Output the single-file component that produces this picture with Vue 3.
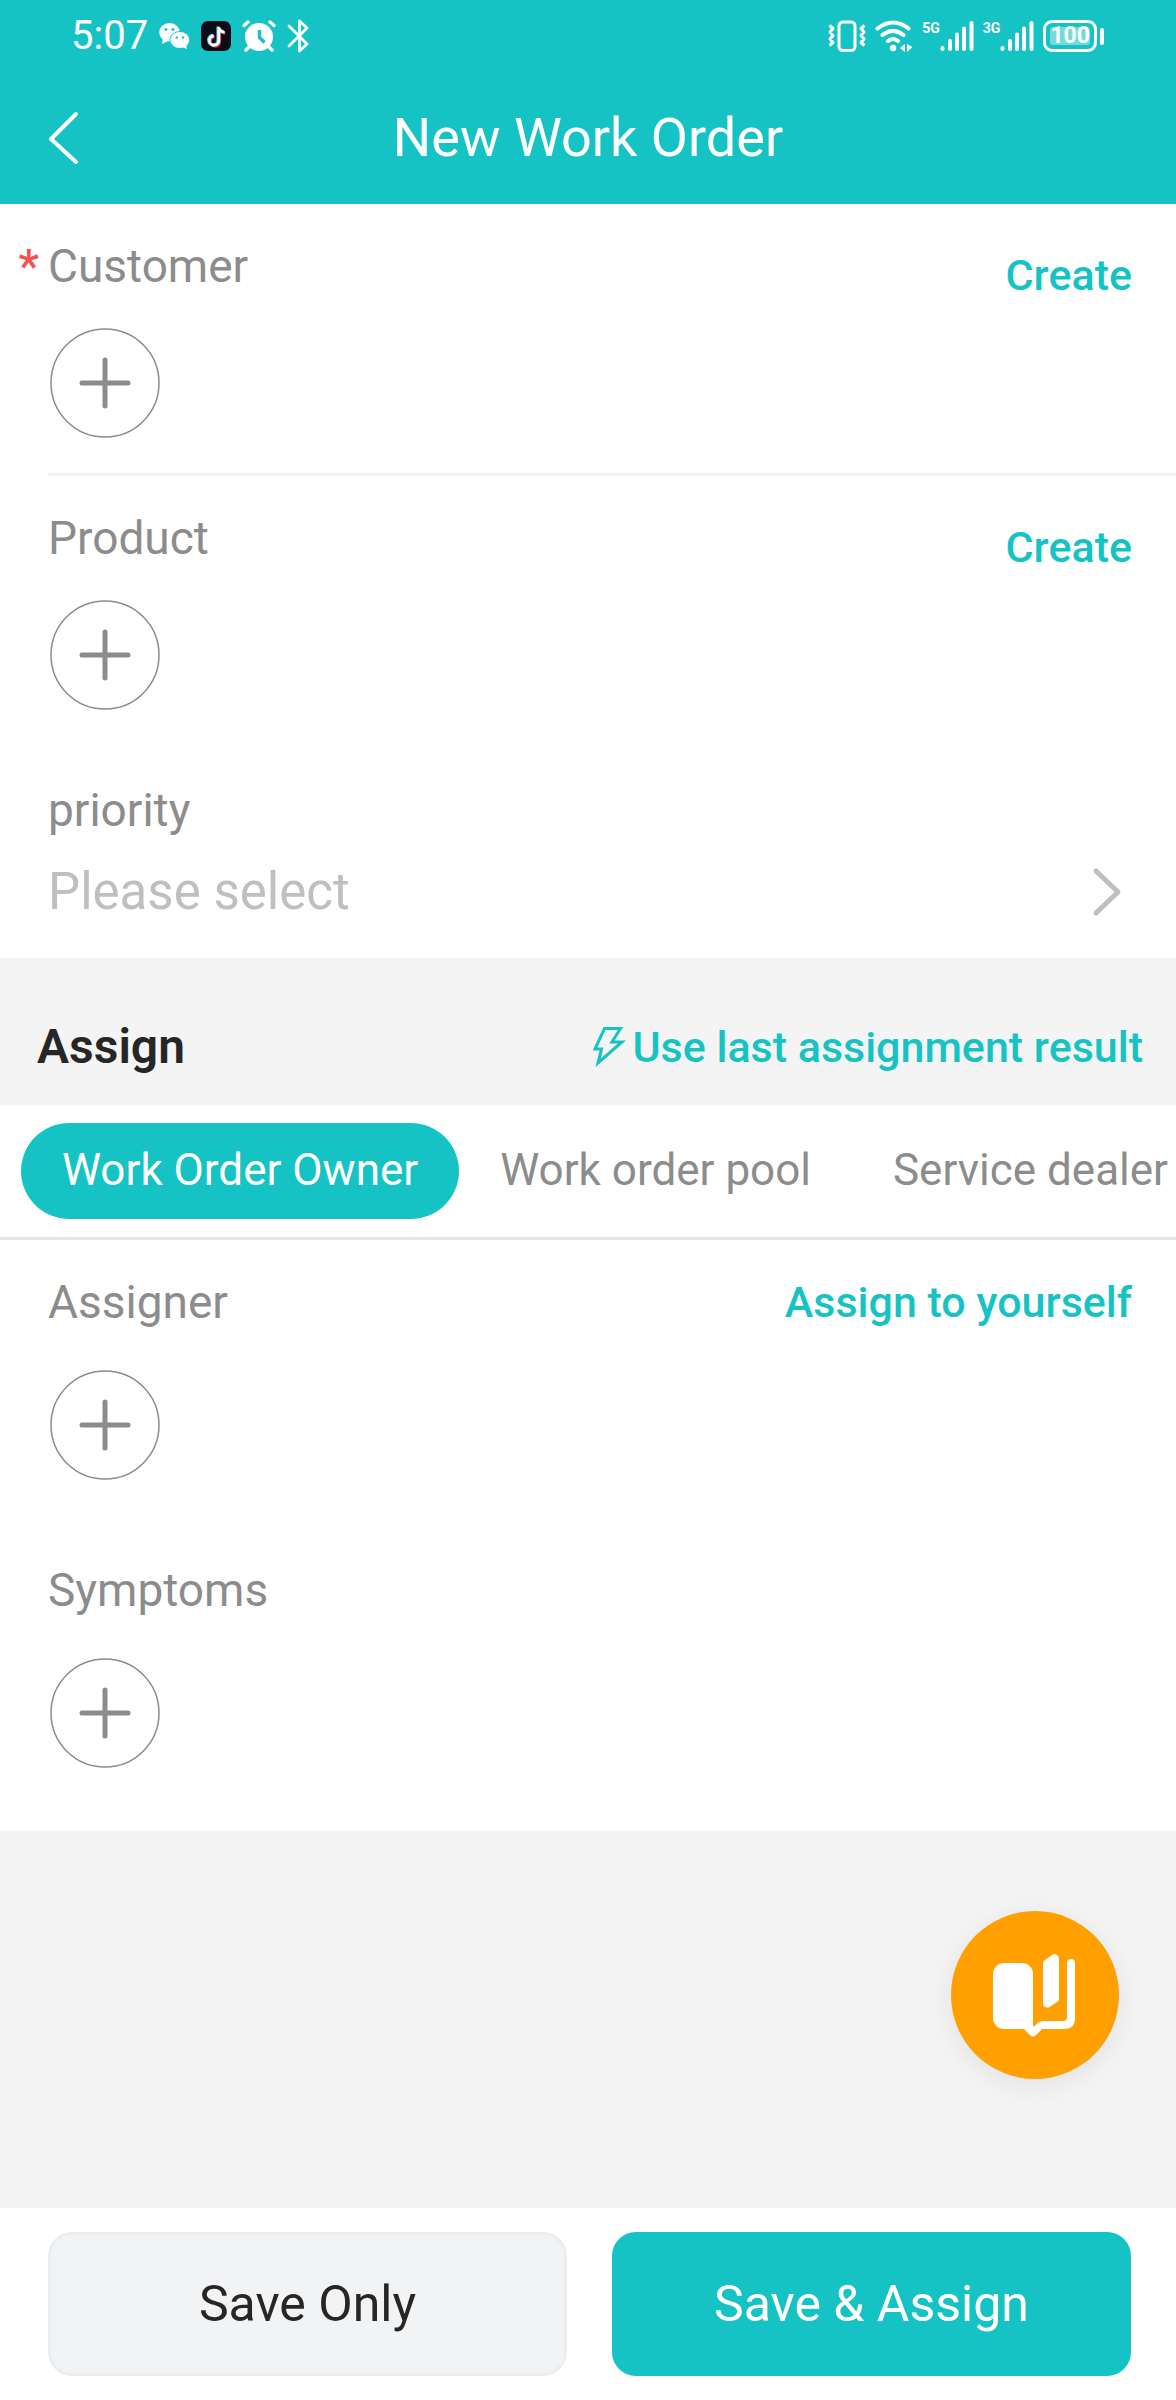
<script setup>
import { ref } from 'vue'

const tabs = ['Work Order Owner', 'Work order pool', 'Service dealer']
const activeTab = ref(0)
const priority = ref('')
const networks = ['5G', '3G']

const topFields = [
  { id: 'customer', label: 'Customer', required: true },
  { id: 'product', label: 'Product', required: false },
]
const assignFields = [
  { id: 'assigner', label: 'Assigner', action: 'Assign to yourself' },
  { id: 'symptoms', label: 'Symptoms', action: '' },
]
</script>

<template>
  <div class="page">
    <header class="header">
      <div class="status">
        <div class="status-group left">
          <span class="time">5:07</span>
          <svg width="31" height="28" viewBox="0 0 31 28" fill="#fff">
            <ellipse cx="10.5" cy="10.3" rx="10.3" ry="9.3" />
            <path d="M4 16l-1 6 6-3z" />
            <ellipse cx="20.8" cy="18" rx="10.4" ry="9" fill="#16c3c4" />
            <ellipse cx="20.8" cy="18" rx="9.4" ry="8" />
            <path d="M23 25l5 2-1-5z" />
            <g fill="#16c3c4">
              <circle cx="7" cy="7.5" r="1.4" /><circle cx="14" cy="7.5" r="1.4" />
              <circle cx="17.7" cy="15.5" r="1.2" /><circle cx="24" cy="15.5" r="1.2" />
            </g>
          </svg>
          <svg width="30" height="30" viewBox="0 0 30 30" fill="none" stroke-width="3">
            <rect width="30" height="30" rx="7" fill="#0c0c18" />
            <path d="M17.800 6v13.500a4.700 4.700 0 1 1-5-4.600M17.800 6.500c.6 3 2.600 4.500 5.700 4.700" stroke="#f0435f" transform="translate(.8 .8)" />
            <path d="M17.800 6v13.500a4.700 4.700 0 1 1-5-4.600M17.800 6.500c.6 3 2.600 4.500 5.700 4.700" stroke="#5fe6ea" transform="translate(-.8 -.6)" />
            <path d="M17.800 6v13.500a4.700 4.700 0 1 1-5-4.600M17.800 6.500c.6 3 2.600 4.500 5.700 4.700" stroke="#fff" stroke-width="2.600" />
          </svg>
          <svg width="34" height="32" viewBox="0 0 34 32" fill="none" stroke="#fff" stroke-width="3.400" stroke-linecap="round">
            <circle cx="17" cy="17" r="14" fill="#fff" stroke="none" />
            <path d="M2 5.500l4-3.500M32 5.500L28 2M7 27l-3 3M27 27l3 3" />
            <path d="M17.500 10v7.500l5 5" stroke="#16c3c4" stroke-linecap="butt" stroke-linejoin="round" />
          </svg>
          <svg width="22" height="34" viewBox="0 0 22 34" fill="none" stroke="#fff" stroke-width="2.800" stroke-linecap="round" stroke-linejoin="round">
            <path d="M2 7l18 18-7.500 7V2L20 9 2 27" />
          </svg>
        </div>
        <div class="status-group">
          <svg width="38" height="32" viewBox="0 0 38 32" fill="none" stroke="#fff" stroke-width="3">
            <rect x="11" y="2" width="16" height="28.500" rx="4" />
            <path d="M1.500 5.500l3.500 3-3 3.500 3 3.500-3 3.500 3 3.500-3.500 3M36.500 5.500l-3.500 3 3 3.500-3 3.500 3 3.500-3 3.500 3.500 3" stroke-linejoin="round" />
          </svg>
          <svg width="38" height="32" viewBox="0 0 38 32" fill="none" stroke="#fff" stroke-width="4" stroke-linecap="round">
            <path d="M2.500 8.500q15.500-12 31 0M7.500 15q10.500-8 21 0M13 21q5-4 10 0" />
            <circle cx="18" cy="28" r="3.200" fill="#fff" stroke="none" />
            <path d="M30 24v8l-5-4zM32 24v8l5.500-5z" fill="#fff" stroke="none" />
          </svg>
          <span v-for="net in networks" :key="net" class="signal">
            <span class="net">{{ net }}</span>
            <svg width="34" height="32" viewBox="0 0 34 32" stroke="#fff" stroke-width="4" stroke-linecap="round">
              <path d="M2.500 28v1M10 21v8M17 14.500V29M24 8.500V29M31.500 3v26" />
            </svg>
          </span>
          <span class="battery">
            <span class="cell"><span class="charge">100</span></span>
            <span class="nub"></span>
          </span>
        </div>
      </div>
      <div class="navbar">
        <button class="back" type="button" aria-label="Back">
          <svg width="32" height="54" viewBox="0 0 32 54" fill="none" stroke="#fff" stroke-width="4" stroke-linecap="round" stroke-linejoin="round">
            <path d="M28 3L3 28l25 23" />
          </svg>
        </button>
        <h1 class="title">New Work Order</h1>
      </div>
    </header>

    <main class="main">
      <section class="panel">
        <div v-for="field in topFields" :key="field.id" class="field" :class="{ divided: field.required }">
          <div class="field-head">
            <label class="label" :for="field.id"><span v-if="field.required" class="star">*</span>{{ field.label }}</label>
            <button class="link low" type="button">Create</button>
          </div>
          <button :id="field.id" class="add" type="button">
            <svg width="110" height="110" viewBox="0 0 110 110" fill="none" stroke="#8c8c8c" stroke-width="5" stroke-linecap="round">
              <circle cx="55" cy="55" r="54" stroke-width="1.500" />
              <path d="M55 32v46M32 55h46" />
            </svg>
          </button>
        </div>
        <div class="field priority">
          <label class="label" for="priority">priority</label>
          <div class="select-row">
            <select id="priority" v-model="priority" class="select">
              <option value="">Please select</option>
            </select>
            <svg width="30" height="50" viewBox="0 0 30 50" fill="none" stroke="#bfbfbf" stroke-width="5" stroke-linecap="round" stroke-linejoin="round">
              <path d="M4 4l22 21L4 46" />
            </svg>
          </div>
        </div>
      </section>

      <div class="assign-head">
        <h2 class="assign-title">Assign</h2>
        <button class="link" type="button">
          <svg class="bolt" width="34" height="42" viewBox="0 0 34 42" fill="none" stroke="#16c3c4" stroke-width="3">
            <path d="M12.500 2.500h16L20 16h10L6 37l3.500-14H3z" />
          </svg>Use last assignment result
        </button>
      </div>

      <section class="panel">
        <div class="tabs" role="tablist">
          <button
            v-for="(tab, i) in tabs"
            :key="tab"
            class="tab"
            :class="{ active: i === activeTab }"
            type="button"
            role="tab"
            :aria-selected="i === activeTab"
            @click="activeTab = i"
          >{{ tab }}</button>
        </div>
        <div v-for="field in assignFields" :key="field.id" class="field roomy">
          <div class="field-head">
            <label class="label" :for="field.id">{{ field.label }}</label>
            <button v-if="field.action" class="link" type="button">{{ field.action }}</button>
          </div>
          <button :id="field.id" class="add" type="button">
            <svg width="110" height="110" viewBox="0 0 110 110" fill="none" stroke="#8c8c8c" stroke-width="5" stroke-linecap="round">
              <circle cx="55" cy="55" r="54" stroke-width="1.500" />
              <path d="M55 32v46M32 55h46" />
            </svg>
          </button>
        </div>
      </section>
    </main>

    <button class="fab" type="button" aria-label="Guide">
      <svg width="168" height="168" viewBox="0 0 168 168" fill="#fff">
        <path d="M53 52h18a11 11 0 0 1 11 11v53l5-4q2-2 5-2h20q4 0 4-4V52a4 4 0 0 1 8 0v55q0 11-11 11H91l-6 6q-3 3-6 0l-6-6H53a11 11 0 0 1-11-11V63a11 11 0 0 1 11-11z" />
        <path d="M94 49l7-5q3-2 5 0 2 1 2 4v40q0 2-2 3l-6 4q-3 3-6 1-2-1-2-4V53q0-3 2-4z" />
      </svg>
    </button>

    <footer class="footer">
      <button class="btn" type="button">Save Only</button>
      <button class="btn primary" type="button">Save &amp; Assign</button>
    </footer>
  </div>
</template>

<style>
body {
  margin: 0;
}
</style>

<style scoped>
.page {
  position: relative;
  display: flex;
  flex-direction: column;
  min-height: 100vh;
  background: #f4f4f4;
  font-family: Roboto, "Liberation Sans", sans-serif;
  color: #262626;
}
button,
select {
  margin: 0;
  padding: 0;
  border: 0;
  background: none;
  font: inherit;
  color: inherit;
}
svg {
  display: block;
  flex: none;
}
.header {
  background: #16c3c4;
  color: #fff;
}
.status {
  display: flex;
  justify-content: space-between;
  align-items: center;
  height: 72px;
  padding: 0 72px 0 71px;
}
.status-group {
  display: flex;
  align-items: center;
  gap: 9px;
}
.status-group.left {
  gap: 11px;
}
.time {
  font-size: 40px;
  line-height: 40px;
}
.signal {
  display: flex;
  align-items: flex-start;
}
.net {
  font-size: 14px;
  line-height: 16px;
  font-weight: 700;
}
.battery {
  display: flex;
  align-items: center;
  gap: 3px;
}
.cell {
  box-sizing: border-box;
  padding: 4px;
  border: 3px solid #fff;
  border-radius: 9px;
}
.charge {
  display: block;
  border-radius: 3px;
  background: rgba(255, 255, 255, 0.4);
  font-size: 23px;
  line-height: 18px;
  font-weight: 700;
}
.nub {
  width: 4px;
  height: 17px;
  border-radius: 2px;
  background: #fff;
}
.navbar {
  display: grid;
  grid-template-columns: 48px 1fr 48px;
  align-items: center;
  height: 132px;
  padding: 0 48px;
}
.title {
  margin: 0;
  text-align: center;
  font-size: 54px;
  line-height: 64px;
  font-weight: 400;
}
.main {
  flex: 1;
}
.panel {
  background: #fff;
}
.field {
  margin-left: 48px;
  padding: 32px 0 38px 0;
}
.field.divided {
  border-bottom: 3px solid #f2f3f3;
  padding-bottom: 35px;
}
.field-head {
  display: flex;
  justify-content: space-between;
  align-items: center;
  height: 60px;
  margin-bottom: 32px;
  padding-right: 44px;
}
.label {
  position: relative;
  font-size: 46px;
  line-height: 60px;
  color: #8c8c8c;
}
.star {
  position: absolute;
  right: 100%;
  margin-right: 9px;
  color: #f5504f;
  font-weight: 500;
}
.link {
  display: flex;
  align-items: center;
  font-size: 43px;
  line-height: 60px;
  font-weight: 500;
  color: #16c3c4;
}
.low {
  padding-top: 18px;
}
.add {
  display: block;
  margin-left: 2px;
  border-radius: 50%;
}
.field.priority {
  padding-bottom: 34px;
}
.select-row {
  display: flex;
  align-items: center;
  padding: 20px 54px 0 0;
}
.select {
  flex: 1;
  appearance: none;
  font-size: 51px;
  line-height: 64px;
  color: #bfbfbf;
}
.assign-head {
  display: flex;
  justify-content: space-between;
  align-items: center;
  height: 147px;
  padding: 30px 33px 0 37px;
  box-sizing: border-box;
}
.assign-title {
  margin: 0;
  font-size: 48px;
  line-height: 64px;
  font-weight: 600;
}
.bolt {
  margin-right: 6px;
}
.tabs {
  display: flex;
  overflow: hidden;
  padding: 18px 0 18px 21px;
  border-bottom: 3px solid #e6e6e6;
}
.tab {
  flex: none;
  height: 96px;
  padding: 0 41px 2px;
  border-radius: 48px;
  font-size: 44px;
  color: #8c8c8c;
}
.tab.active {
  background: #16c3c4;
  color: #fff;
}
.roomy .field-head {
  margin-bottom: 38px;
}
.field.roomy {
  padding-bottom: 48px;
}
.field.roomy:last-child {
  padding-bottom: 63px;
}
.fab {
  position: absolute;
  right: 57px;
  bottom: 321px;
  border-radius: 50%;
  background: #ffa000;
  box-shadow: 0 6px 30px rgba(0, 0, 0, 0.08);
}
.footer {
  display: flex;
  gap: 45px;
  padding: 24px 45px 24px 48px;
  background: #fff;
}
.btn {
  flex: 1;
  box-sizing: border-box;
  height: 144px;
  border: 3px solid #ebedf0;
  border-radius: 24px;
  background: #f2f3f5;
  font-size: 50px;
}
.btn.primary {
  border-color: #16c3c4;
  background: #16c3c4;
  color: #fff;
}
</style>
